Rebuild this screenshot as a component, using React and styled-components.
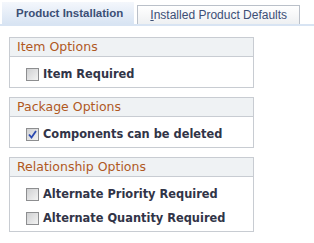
import React from 'react';
import styled, { createGlobalStyle } from 'styled-components';

const GlobalStyle = createGlobalStyle`
  body {
    margin: 0;
    background: #fff;
  }
`;

const Page = styled.div`
  padding-top: 2px;
`;

const TabBar = styled.div`
  display: flex;
  align-items: flex-end;
  gap: 3px;
  padding-left: 2px;
  border-bottom: 2px solid #d8e4f3;
`;

const Tab = styled.div`
  box-sizing: border-box;
  display: flex;
  align-items: center;
  font-family: 'Liberation Sans', Arial, sans-serif;
  color: #3c4f76;
  white-space: nowrap;
  ${(p) =>
    p.$active
      ? `
    height: 22px;
    padding: 0 11px 0 14px;
    font-size: 11.5px;
    font-weight: bold;
    background: linear-gradient(#f4f7fc, #d8e4f3);
  `
      : `
    height: 19px;
    padding: 0 12px;
    font-size: 12px;
    border: 1px solid #bac0c9;
    border-bottom: none;
    background: linear-gradient(#ffffff, #eef0f2);
  `}
`;

const Key = styled.span`
  text-decoration: underline;
`;

const Content = styled.div`
  display: flex;
  flex-direction: column;
  gap: 9px;
  padding: 11px 0 0 9px;
`;

const Panel = styled.div`
  box-sizing: border-box;
  width: 245px;
  border: 1px solid #c8ccd2;
`;

const PanelHeader = styled.div`
  height: 18px;
  line-height: 18px;
  padding-left: 7px;
  background: #eff2f4;
  border-bottom: 1px solid #c8ccd2;
  font-family: 'DejaVu Sans', Verdana, sans-serif;
  font-size: 12.5px;
  color: #b0591f;
`;

const PanelBody = styled.div`
  padding: 5px 0 1px 16px;
`;

const Row = styled.label`
  display: flex;
  align-items: center;
  gap: 4px;
  height: 24px;
  font-family: 'DejaVu Sans', Verdana, sans-serif;
  font-size: 11.4px;
  font-weight: bold;
  color: #313447;
`;

const Box = styled.span`
  box-sizing: border-box;
  display: flex;
  align-items: center;
  justify-content: center;
  width: 13px;
  height: 13px;
  border: 1px solid #8d8e90;
  background: linear-gradient(135deg, #cfd0d2, #f3f3f3);
`;

const Check = ({ checked, label }) => (
  <Row>
    <Box>
      {checked && (
        <svg width="9" height="9" viewBox="0 0 9 9">
          <path d="M1 4.5 L3.5 7.5 L8 1" fill="none" stroke="#2b49b0" strokeWidth="1.8" />
        </svg>
      )}
    </Box>
    {label}
  </Row>
);

const Section = ({ title, children }) => (
  <Panel>
    <PanelHeader>{title}</PanelHeader>
    <PanelBody>{children}</PanelBody>
  </Panel>
);

const App = () => (
  <Page>
    <GlobalStyle />
    <TabBar>
      <Tab $active>Product Installation</Tab>
      <Tab>
        <Key>I</Key>nstalled Product Defaults
      </Tab>
    </TabBar>
    <Content>
      <Section title="Item Options">
        <Check label="Item Required" />
      </Section>
      <Section title="Package Options">
        <Check checked label="Components can be deleted" />
      </Section>
      <Section title="Relationship Options">
        <Check label="Alternate Priority Required" />
        <Check label="Alternate Quantity Required" />
      </Section>
    </Content>
  </Page>
);

export default App;
